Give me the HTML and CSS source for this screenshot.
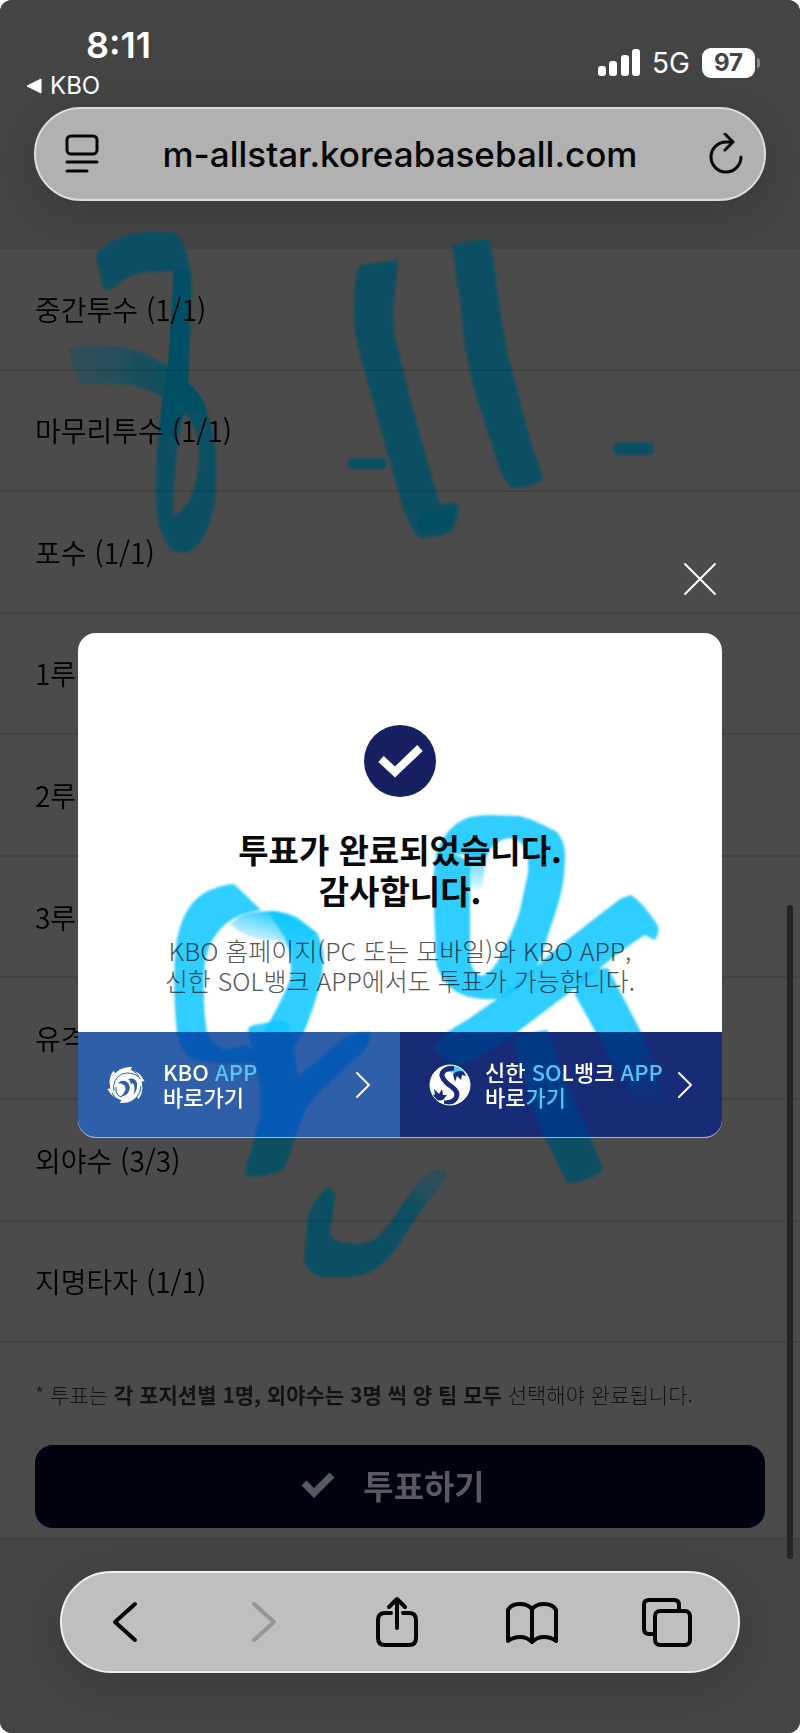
FILE: index.html
```
<!DOCTYPE html>
<html lang="ko">

<head>
    <meta charset="UTF-8">
    <meta name="viewport" content="width=device-width, initial-scale=1.0">
    <title>KBO 올스타 투표</title>
    <link rel="stylesheet" href="styles.css">
</head>

<body>
    <div class="screen">
        <!-- marker strokes, shared by the page and the popup -->
        <svg class="ink-page" viewBox="0 0 800 1733" preserveAspectRatio="none" aria-hidden="true">
            <defs>
                <linearGradient id="fade-left" gradientUnits="userSpaceOnUse" x1="66" y1="0" x2="170" y2="0">
                    <stop offset="0" stop-color="#fff" stop-opacity="0.4" />
                    <stop offset="1" stop-color="#fff" />
                </linearGradient>
                <linearGradient id="fade-tail" gradientUnits="userSpaceOnUse" x1="410" y1="1210" x2="447" y2="1168">
                    <stop offset="0" stop-color="#fff" />
                    <stop offset="1" stop-color="#fff" stop-opacity="0.3" />
                </linearGradient>
                <linearGradient id="fade-top" gradientUnits="userSpaceOnUse" x1="266" y1="912" x2="258" y2="942">
                    <stop offset="0" stop-color="#fff" />
                    <stop offset="1" stop-color="#fff" stop-opacity="0.2" />
                </linearGradient>
                <linearGradient id="fade-hook" gradientUnits="userSpaceOnUse" x1="0" y1="850" x2="0" y2="890">
                    <stop offset="0" stop-color="#fff" />
                    <stop offset="1" stop-color="#fff" stop-opacity="0.1" />
                </linearGradient>
                <linearGradient id="fade-leg" gradientUnits="userSpaceOnUse" x1="630" y1="1050" x2="660" y2="1115">
                    <stop offset="0" stop-color="#fff" />
                    <stop offset="1" stop-color="#fff" stop-opacity="0" />
                </linearGradient>
                <mask id="mask-left" maskUnits="userSpaceOnUse" x="0" y="0" width="800" height="1733"><rect width="800" height="1733" fill="url(#fade-left)" /></mask>
                <mask id="mask-tail" maskUnits="userSpaceOnUse" x="0" y="0" width="800" height="1733"><rect width="800" height="1733" fill="url(#fade-tail)" /></mask>
                <mask id="mask-top" maskUnits="userSpaceOnUse" x="0" y="0" width="800" height="1733"><rect width="800" height="1733" fill="url(#fade-top)" /></mask>
                <mask id="mask-hook" maskUnits="userSpaceOnUse" x="0" y="0" width="800" height="1733"><rect width="800" height="1733" fill="url(#fade-hook)" /></mask>
                <mask id="mask-leg" maskUnits="userSpaceOnUse" x="0" y="0" width="800" height="1733"><rect width="800" height="1733" fill="url(#fade-leg)" /></mask>
                <filter id="soft" x="-5%" y="-5%" width="110%" height="110%">
                    <feGaussianBlur stdDeviation="1" />
                </filter>
                <g id="ink" fill="currentColor" filter="url(#soft)">
                    <path d="M96 256Q98 249 115 240Q130 232 150 232L170 232Q180 233 185 248Q192 268 192 290L188 383Q178 400 163 400Q164 385 168 366Q171 340 172 320L174 271L147 272Q130 274 118 284Q108 293 103 288Z" />
                    <path d="M69 350Q70 346 82 346L115 346Q140 349 168 366L163 398Q150 388 125 384L82 384Q74 378 69 350Z" mask="url(#mask-left)" />
                    <path fill-rule="evenodd" d="M168 366L188 383Q205 398 212 428Q220 465 214 505Q205 552 182 553Q166 552 159 525Q153 500 157 455Q159 420 163 398ZM184 412Q174 450 173 516Q198 505 199 450Q197 425 184 412Z" />
                    <path d="M358 267Q360 264 397 260Q399 262 394 300Q391 330 402 365L413 410L440 505Q452 501 457 504Q461 511 452 532Q435 538 420 538Q412 533 402 505L388 455L365 373Q352 330 354 310Q354 285 358 267Z" />
                    <path d="M452 247Q453 243 485 239Q491 239 492 250L500 310Q505 345 512 370L530 440L543 478Q542 485 512 488Q506 486 500 470L477 400Q465 355 463 330L460 300Z" />
                    <rect x="347" y="458" width="40" height="11" rx="5" />
                    <rect x="613" y="442" width="41" height="13" rx="6" />

                    <path d="M234 884L261 910Q232 914 218 932Q205 948 204 975Q203 1010 207 1033Q212 1045 225 1050L247 1045L262 1062Q205 1066 190 1058Q180 1048 177 1033Q172 985 176 945Q181 910 201 895Q217 885 234 884Z" />
                    <path d="M230 925Q240 910 275 911Q290 914 317 933L290 950Q280 940 273 940Q252 942 230 925Z" mask="url(#mask-top)" />
                    <path d="M268 911Q290 911 302 921L317 933Q325 948 323 965Q321 990 304 1032L293 1047L262 1034Q280 1005 290 980Q293 960 286 940Z" />
                    <path d="M248 1030Q248 1025 260 1024L280 1020Q288 1020 289 1026L298 1077L345 1037Q355 1032 370 1032Q370 1042 365 1050L330 1082Q306 1103 300 1122L286 1165Q283 1172 275 1173Q255 1178 246 1176Q244 1172 250 1153L260 1118L260 1086Z" />
                    <path d="M470 817Q480 815 490 815L520 816Q535 820 557 832Q564 840 565 852Q566 885 553 920L540 960Q520 995 497 999Q465 1001 450 987Q436 972 436 960L433 880L437 848Q448 850 470 862V960Q473 974 482 976Q493 972 500 957Q514 930 520 910L528 873Q530 840 510 838Q493 840 486 857L437 852Q446 825 470 817Z" />
                    <path d="M468 850L488 852Q484 865 483 885Q478 892 468 888Z" mask="url(#mask-hook)" />
                    <path d="M630 895Q639 898 657 924Q661 934 654 940L645 935Q620 950 590 977L520 1030Q490 1055 460 1065Q440 1060 434 1047Q440 1035 467 1020L500 997L567 940L620 899Z" />
                    <path d="M579 976Q594 968 608 968L640 1030L667 1098Q665 1110 650 1113Q640 1112 600 1040L575 995Z" mask="url(#mask-leg)" />
                    <path d="M513 1042Q520 1034 547 1030L563 1073L603 1168Q600 1178 567 1184L540 1127Z" />

                    <path d="M308 1215Q315 1198 328 1187Q335 1189 335 1198L330 1233Q332 1240 340 1242Q365 1247 377 1238Q392 1222 402 1205L423 1177Q433 1168 447 1170Q447 1180 440 1187L423 1207L400 1243Q383 1270 360 1276Q335 1279 318 1276Q305 1271 304 1258Z" mask="url(#mask-tail)" />
                </g>
            </defs>
            <use href="#ink" />
            <path class="ink-overlap" d="M174 272Q184 262 190 278L188 383Q205 398 206 412L184 412L176 440L160 430L163 398L168 366ZM420 510Q440 515 455 506L452 524Q430 534 418 528Z" />
        </svg>

        <header class="browser-top">
            <div class="status">
                <div class="clock">
                    <div class="time">8:11</div>
                    <a class="back-app" href="#"><svg width="16" height="16" viewBox="0 0 16 16"><path d="M1 8L15 1V15Z" fill="#fff" stroke="#fff" stroke-linejoin="round" /></svg>KBO</a>
                </div>
                <div class="signals">
                    <svg width="42" height="28" viewBox="0 0 42 28" fill="#fff">
                        <rect x="0" y="17" width="8" height="10" rx="3" />
                        <rect x="11" y="12" width="8" height="15" rx="3" />
                        <rect x="23" y="6" width="8" height="21" rx="3" />
                        <rect x="34" y="0" width="8" height="27" rx="3" />
                    </svg>
                    <span>5G</span>
                    <span class="battery">97</span>
                </div>
            </div>
            <div class="address">
                <button class="icon-button" aria-label="페이지 메뉴">
                    <svg width="48" height="42" viewBox="-8 0 48 42" fill="none" stroke="#050505" stroke-width="3" stroke-linecap="round">
                        <rect x="3" y="3" width="30" height="18" rx="4" />
                        <path d="M3 29H33M3 38H23" />
                    </svg>
                </button>
                <a class="url" href="#">m-allstar.koreabaseball.com</a>
                <button class="icon-button" aria-label="새로고침">
                    <svg width="48" height="42" viewBox="-12 0 48 42" fill="none" stroke="#050505" stroke-width="3" stroke-linecap="round" stroke-linejoin="round">
                        <path d="M24 9H18A15 15 0 1 0 33 24M17 1L25 9L17 17" />
                    </svg>
                </button>
            </div>
        </header>

        <main class="vote">
            <ul class="positions">
                <li>중간투수 (1/1)</li>
                <li>마무리투수 (1/1)</li>
                <li>포수 (1/1)</li>
                <li>1루수 (1/1)</li>
                <li>2루수 (1/1)</li>
                <li>3루수 (1/1)</li>
                <li>유격수 (1/1)</li>
                <li>외야수 (3/3)</li>
                <li>지명타자 (1/1)</li>
            </ul>
            <p class="note">* 투표는 <b>각 포지션별 1명, 외야수는 3명 씩 양 팀 모두</b> 선택해야 완료됩니다.</p>
            <button class="vote-button">
                <svg width="34" height="26" viewBox="0 0 34 26" fill="none" stroke="#59595f" stroke-width="7"><path d="M3 11L13 21L31 3" /></svg>
                투표하기
            </button>
        </main>

        <footer class="browser-bottom">
            <nav class="toolbar">
                <button class="icon-button" aria-label="뒤로">
                    <svg width="54" height="52" viewBox="-2 0 54 52"><path d="M34 8L14 26L34 44" /></svg>
                </button>
                <button class="icon-button" aria-label="앞으로" disabled>
                    <svg width="54" height="52" viewBox="-4 0 54 52"><path d="M16 8L36 26L16 44" /></svg>
                </button>
                <button class="icon-button" aria-label="공유">
                    <svg width="54" height="52" viewBox="-2 0 54 52"><path d="M19 17H13Q6 17 6 24V42Q6 49 13 49H37Q44 49 44 42V24Q44 17 37 17H31M25 32V3M17 11L25 3L33 11" /></svg>
                </button>
                <button class="icon-button" aria-label="책갈피">
                    <svg width="54" height="52" viewBox="0 0 54 52"><path d="M27 13V46M27 13Q23 8 15 8Q6 8 3 14V45Q8 41 15 41Q22 41 27 46Q32 41 39 41Q46 41 51 45V14Q48 8 39 8Q31 8 27 13Z" /></svg>
                </button>
                <button class="icon-button" aria-label="탭">
                    <svg width="54" height="52" viewBox="0 0 54 52"><path d="M14 38H9Q4 38 4 33V9Q4 4 9 4H34Q39 4 39 9V14" /><rect x="15" y="15" width="35" height="34" rx="5" /></svg>
                </button>
            </nav>
        </footer>

        <div class="scrollbar"></div>

        <div class="overlay">
            <button class="close" aria-label="닫기">
                <svg width="34" height="34" viewBox="0 0 34 34" stroke="#fff" stroke-width="2" stroke-linecap="round"><path d="M2 2L32 32M32 2L2 32" /></svg>
            </button>
            <section class="popup" role="dialog" aria-labelledby="done-title">
                <div class="popup-body">
                    <svg class="done-icon" width="74" height="74" viewBox="0 0 74 74">
                        <circle cx="37" cy="37" r="36" fill="#172060" />
                        <path d="M18 35L32 48L57 24" fill="none" stroke="#fff" stroke-width="8" />
                    </svg>
                    <h1 id="done-title">투표가 완료되었습니다.<br>감사합니다.</h1>
                    <p>KBO 홈페이지(PC 또는 모바일)와 KBO APP,<br>신한 SOL뱅크 APP에서도 투표가 가능합니다.</p>
                    <svg class="ink-paper" viewBox="78 633 644 399" preserveAspectRatio="none" aria-hidden="true"><use href="#ink" /></svg>
                </div>
                <div class="popup-links">
                    <a class="link-kbo" href="#">
                        <svg class="ink-link" viewBox="78 1032 322 105" preserveAspectRatio="none" aria-hidden="true"><use href="#ink" /></svg>
                        <svg class="logo" width="42" height="42" viewBox="0 0 42 42" aria-hidden="true">
                            <g transform="translate(-2 0)">
                                <circle cx="21" cy="21" r="16" fill="#fff" />
                                <g fill="#fff">
                                    <path id="petal" d="M8 13Q14 2 27 3L24 9Z" />
                                    <use href="#petal" transform="rotate(60 21 21)" />
                                    <use href="#petal" transform="rotate(120 21 21)" />
                                    <use href="#petal" transform="rotate(180 21 21)" />
                                    <use href="#petal" transform="rotate(240 21 21)" />
                                    <use href="#petal" transform="rotate(300 21 21)" />
                                </g>
                                <g fill="#2e5fa8">
                                    <path d="M13 19Q17 15 22 18Q27 22 23 29Q20 33 16 32Q22 27 20 22Q17 19 13 19Z" />
                                    <path d="M23 15Q30 13 32 19Q33 26 28 31Q31 24 28 19Q26 19 26 22Q26 17 23 15Z" />
                                </g>
                                <g fill="none" stroke="#2e5fa8" stroke-width="1">
                                    <path d="M9 27Q7 15 17 10Q26 7 34 13M11 23Q10 32 17 33" />
                                    <path d="M27 6Q33 9 35 15M36 22Q36 29 31 34M15 37Q9 34 7 29" />
                                </g>
                            </g>
                        </svg>
                        <span class="label">KBO <span class="inked">APP</span><br>바로가기</span>
                        <svg class="arrow" width="16" height="28" viewBox="0 0 16 28"><path d="M2 2L14 14L2 26" /></svg>
                    </a>
                    <a class="link-sol" href="#">
                        <svg class="ink-link" viewBox="400 1032 322 105" preserveAspectRatio="none" aria-hidden="true"><use href="#ink" /></svg>
                        <svg class="logo" width="42" height="42" viewBox="0 0 42 42" aria-hidden="true">
                            <circle cx="21" cy="21" r="20" fill="#fff" />
                            <path d="M17 2Q30 -1 36 8L27 10L18 7Z" fill="#52c5f5" />
                            <path d="M25 4Q12 5 13 12Q15 18 23 23Q30 28 27 34Q24 39 15 39" fill="none" stroke="#182b76" stroke-width="5" />
                            <path d="M24 10Q29 5 35 8L37 12L33 11L32 16L28 12L26 18Z" fill="#182b76" />
                            <path d="M1 29L6 31L5 25L10 30L13 25L14 31L18 31L14 36L7 37Z" fill="#182b76" />
                            <circle cx="21" cy="21" r="20" fill="none" stroke="#fff" stroke-width="1" />
                        </svg>
                        <span class="label">신한 <span class="inked">SO</span>L뱅크 <span class="inked">APP</span><br>바로<span class="inked">가기</span></span>
                        <svg class="arrow" width="16" height="28" viewBox="0 0 16 28"><path d="M2 2L14 14L2 26" /></svg>
                    </a>
                </div>
            </section>
        </div>
    </div>
</body>

</html>
```
FILE: styles.css
```
* {
    box-sizing: border-box;
}

body {
    margin: 0;
    background: #fff;
    font-family: "Noto Sans CJK KR", sans-serif;
}

a {
    color: inherit;
    text-decoration: none;
}

button {
    border: 0;
    padding: 0;
    background: none;
    font-family: inherit;
}

svg {
    display: block;
    flex: none;
}

.screen {
    position: relative;
    display: flex;
    flex-direction: column;
    min-height: 100vh;
    background: #4b4b4b;
    border-radius: 12px;
    overflow: hidden;
    isolation: isolate;
}

/* browser chrome */
.browser-top {
    height: 249px;
    padding: 24px 34px 0;
    background: #444;
    font-family: Inter, "Liberation Sans", sans-serif;
    color: #fff;
}

.status {
    display: flex;
    justify-content: space-between;
    height: 83px;
}

.time {
    padding-left: 52px;
    font-size: 36px;
    font-weight: 600;
    line-height: 42px;
}

.back-app {
    display: flex;
    align-items: center;
    gap: 8px;
    margin-left: -8px;
    font-size: 24px;
    line-height: 40px;
}

.signals {
    display: flex;
    align-items: center;
    gap: 12px;
    height: 78px;
    padding-right: 11px;
    font-size: 28px;
}

.battery {
    position: relative;
    width: 53px;
    border-radius: 9px;
    background: #fff;
    color: #444;
    font-size: 24px;
    font-weight: 700;
    line-height: 30px;
    text-align: center;
}

.battery::after {
    content: "";
    position: absolute;
    top: 10px;
    right: -5px;
    width: 3px;
    height: 10px;
    border-radius: 0 4px 4px 0;
    background: #8a8a8a;
}

.address {
    display: flex;
    align-items: center;
    justify-content: space-between;
    height: 94px;
    padding: 0 20px;
    border: 2px solid #ddd;
    border-radius: 47px;
    background: #b1b1b1;
    box-shadow: 0 10px 40px rgba(0, 0, 0, 0.15);
    color: #050505;
}

.url {
    font-size: 35px;
    font-weight: 500;
}

.browser-bottom {
    padding: 34px 60px 60px;
    background: #444;
}

.toolbar {
    display: flex;
    align-items: center;
    justify-content: space-between;
    height: 102px;
    padding: 0 44px 0 37px;
    border: 2px solid #eee;
    border-radius: 51px;
    background: #bfbfbf;
    box-shadow: 0 10px 40px rgba(0, 0, 0, 0.15);
}

.toolbar svg {
    fill: none;
    stroke: #050505;
    stroke-width: 4;
    stroke-linecap: round;
    stroke-linejoin: round;
}

.toolbar button:disabled svg {
    stroke: #959595;
}

/* vote page */
.vote {
    position: relative;
    flex: 1;
    display: flex;
    flex-direction: column;
    color: #000;
}

.positions {
    flex: 1;
    display: flex;
    flex-direction: column;
    margin: 0;
    padding: 0;
    list-style: none;
}

.positions li {
    flex: 1;
    display: flex;
    align-items: center;
    padding: 0 35px;
    border-bottom: 2px solid rgba(0, 0, 0, 0.1);
    font-size: 28px;
    font-weight: 350;
}

.note {
    margin: 0;
    padding: 35px 35px;
    font-size: 21px;
    font-weight: 300;
    line-height: 32px;
    color: #121212;
}

.note b {
    font-weight: 700;
}

.vote-button {
    display: flex;
    align-items: center;
    justify-content: center;
    gap: 28px;
    height: 83px;
    margin: 0 35px 9px;
    padding: 0 14px 4px 0;
    border-radius: 18px;
    background: #00020f;
    color: #59595f;
    font-size: 33px;
    font-weight: 700;
}

.scrollbar {
    position: absolute;
    top: 905px;
    right: 7px;
    width: 6px;
    height: 654px;
    border-radius: 3px;
    background: #242424;
}

/* popup */
.overlay {
    position: absolute;
    inset: 0;
    display: flex;
    flex-direction: column;
    justify-content: center;
    padding: 0 78px 33px;
}

.close {
    align-self: flex-end;
    margin: 0 5px 37px;
}

.popup {
    border-bottom: 1px solid #a9b4d4;
    border-radius: 18px;
    background: #fff;
    overflow: hidden;
}

.popup-body {
    position: relative;
    padding: 91px 20px 37px;
    text-align: center;
}

.done-icon {
    margin: 0 auto 31px;
}

.popup h1 {
    margin: 0 0 24px;
    color: #0a0a0a;
    font-size: 33px;
    font-weight: 700;
    line-height: 41px;
}

.popup p {
    margin: 0;
    color: #555;
    font-size: 25px;
    font-weight: 300;
    line-height: 30px;
}

.popup-links {
    display: flex;
}

.popup-links a {
    position: relative;
    flex: 1;
    display: flex;
    align-items: center;
    height: 105px;
    padding: 0 29px;
    color: #fff;
    font-size: 22px;
    font-weight: 500;
    line-height: 25px;
}

.popup-links .link-kbo {
    background: #2e5fa8;
}

.popup-links .link-sol {
    background: #182b76;
}

.logo {
    position: relative;
}

.label {
    position: relative;
    flex: 1;
    padding: 0 0 2px 14px;
    white-space: nowrap;
}

.inked {
    display: inline-block;
    color: #52c5f5;
}

.arrow {
    position: relative;
    fill: none;
    stroke: #fff;
    stroke-width: 2;
    stroke-linecap: round;
}

/* marker ink */
.ink-page,
.ink-paper,
.ink-link {
    position: absolute;
    inset: 0;
    width: 100%;
    height: 100%;
}

.ink-page {
    color: #0f5062;
}

.ink-overlap {
    fill: #004f65;
}

.ink-paper {
    color: #12c6ff;
    fill-opacity: 0.86;
    mix-blend-mode: multiply;
}

.ink-link {
    fill-opacity: 0.86;
}

.link-kbo .ink-link {
    color: #005ab6;
}

.link-sol .ink-link {
    color: #003b88;
}
```
